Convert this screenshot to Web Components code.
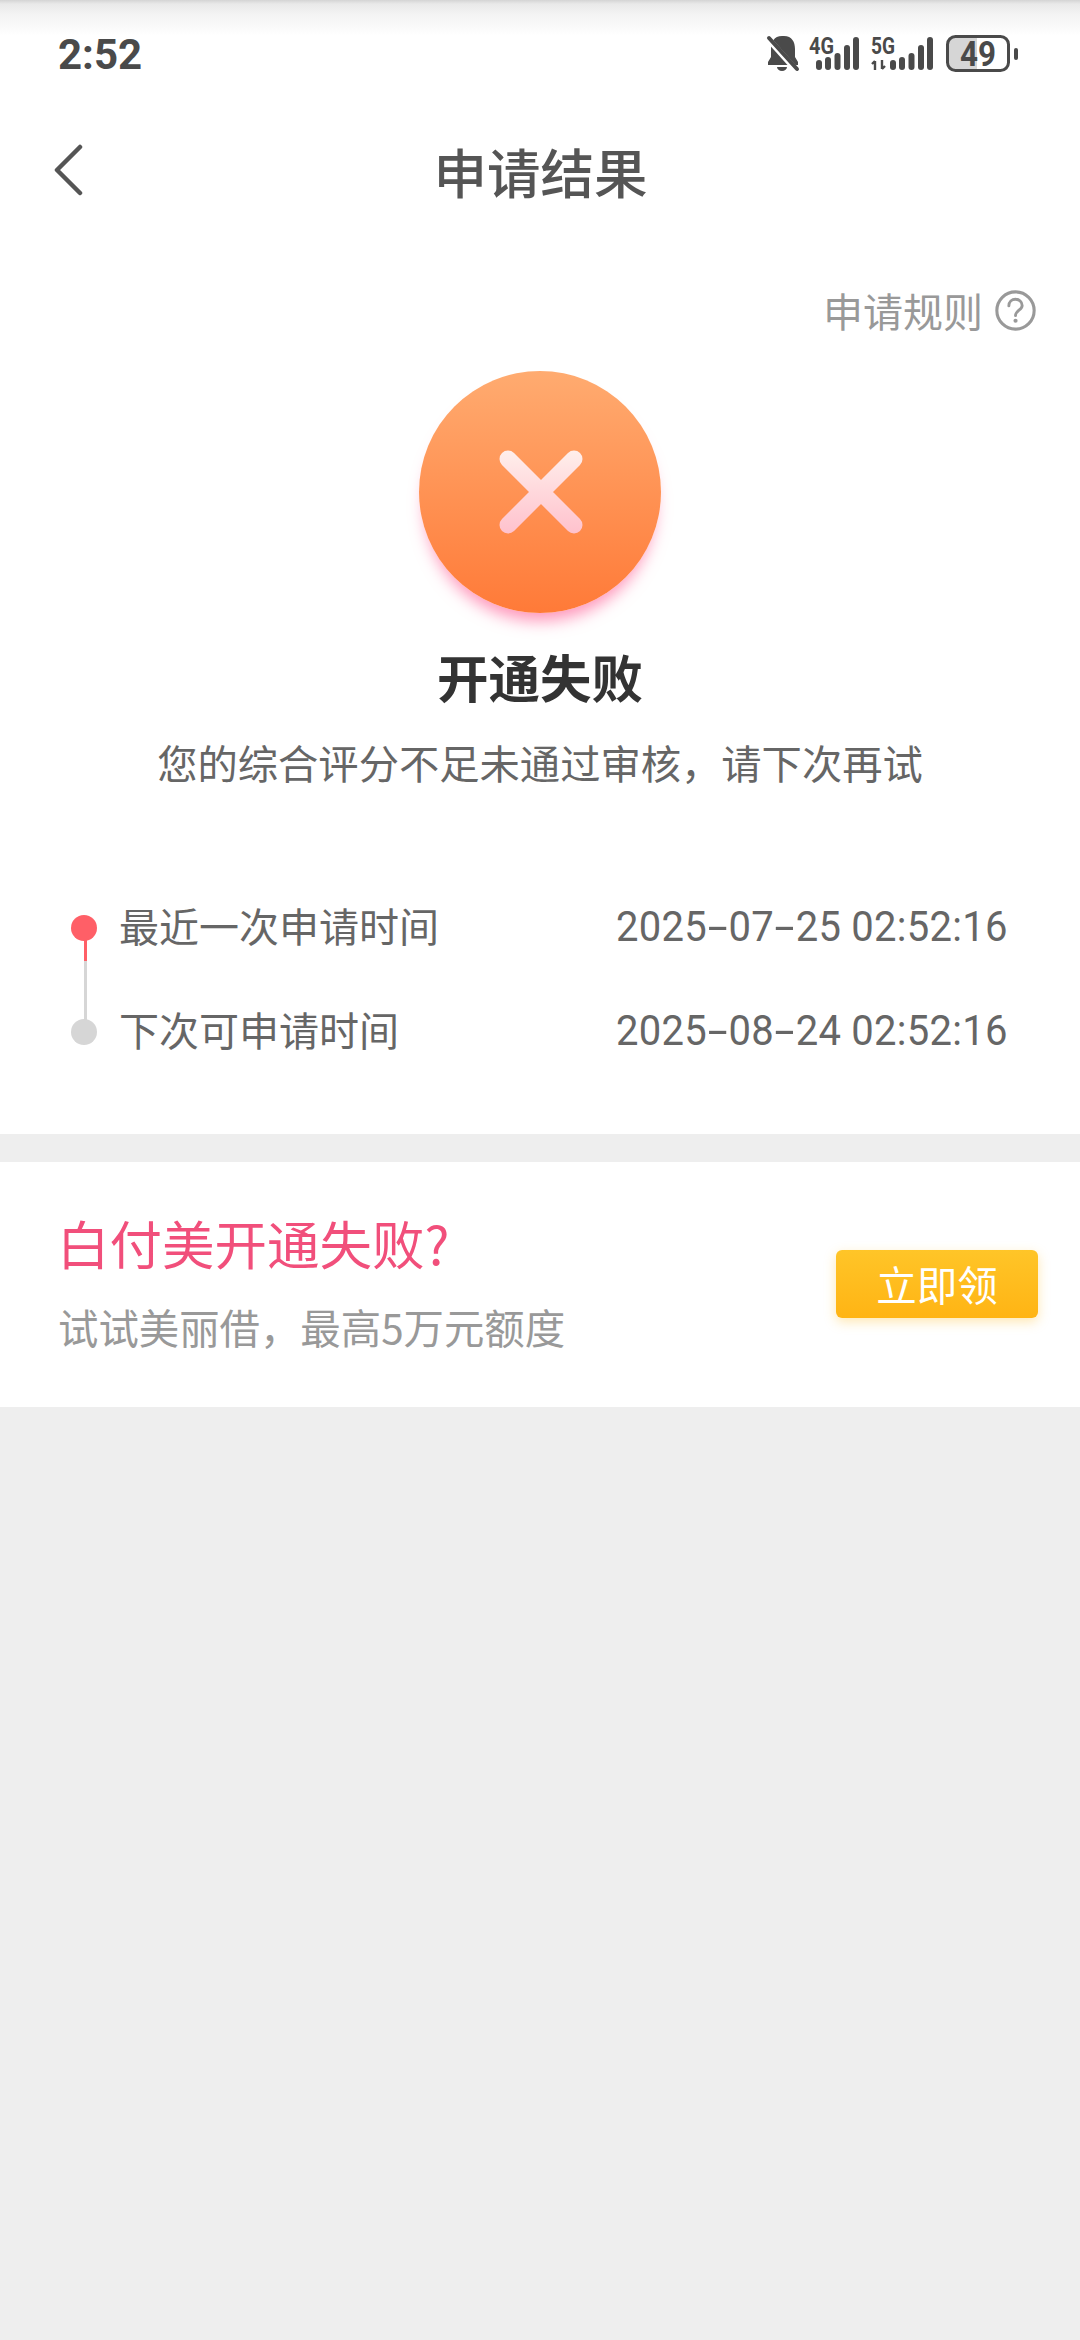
<!DOCTYPE html>
<html lang="zh">
<head>
<meta charset="utf-8">
<title>申请结果</title>
<style>
  html, body { margin: 0; padding: 0; }
  body {
    width: 1080px;
    height: 2340px;
    overflow: hidden;
    background: #eeeeee;
    font-family: "Noto Sans CJK SC", "Noto Sans", sans-serif;
  }
  .top { display: block; background: #fff; }
</style>
</head>
<body>
<div class="top">
  <status-bar time="2:52" battery="49"></status-bar>
  <nav-bar>申请结果</nav-bar>
  <rule-link>申请规则</rule-link>
  <result-hero title="开通失败">您的综合评分不足未通过审核，请下次再试</result-hero>
  <time-line>
    <time-row label="最近一次申请时间" value="2025-07-25 02:52:16" active></time-row>
    <time-row label="下次可申请时间" value="2025-08-24 02:52:16"></time-row>
  </time-line>
</div>
<promo-card heading="白付美开通失败?" action="立即领">试试美丽借，最高5万元额度</promo-card>

<script>
class StatusBar extends HTMLElement {
  constructor() {
    super();
    this.shadowDOM = this.attachShadow({ mode: 'open' });
  }

  connectedCallback() {
    const time = this.getAttribute('time');
    const battery = this.getAttribute('battery');
    this.shadowDOM.innerHTML = `
      <style>
        :host {
          display: flex;
          align-items: flex-start;
          justify-content: space-between;
          height: 78px;
          padding: 31px 60px 0 58px;
          box-sizing: border-box;
          background: linear-gradient(#d4d4d4 0, #e9e9e9 4px, #f3f3f3 14px, #ffffff 36px);
        }
        .time {
          font: 700 42px/48px Roboto, sans-serif;
          color: #4a4a4a;
        }
        svg { display: block; margin-top: -7px; }
        text { font-family: Roboto, sans-serif; font-weight: 700; fill: #4a4a4a; }
      </style>
      <span class="time">${time}</span>
      <svg width="260" height="54" viewBox="760 24 260 54">
        <g fill="#4a4a4a">
          <path d="M782 36c-8 0-11 6-11 13v8l-3 5v3h30v-3l-3-5v-8c0-7-3-13-11-13z"/>
          <path d="M777 67h10a5 4 0 0 1-10 0z"/>
        </g>
        <path d="M770 41l26 29" stroke="#fff" stroke-width="6"/>
        <path d="M769 38l28 31" stroke="#4a4a4a" stroke-width="4" stroke-linecap="round"/>

        <text x="809" y="54" font-size="24" textLength="25" lengthAdjust="spacingAndGlyphs">4G</text>
        <g fill="#4a4a4a">
          <rect x="816" y="60" width="6" height="10" rx="3"/>
          <rect x="825" y="57" width="6" height="13" rx="3"/>
          <rect x="834.500" y="53" width="6" height="17" rx="3"/>
          <rect x="844" y="45" width="6" height="25" rx="3"/>
          <rect x="853" y="37" width="6" height="33" rx="3"/>
        </g>

        <text x="871" y="54" font-size="24" textLength="24" lengthAdjust="spacingAndGlyphs">5G</text>
        <path d="M875 70v-9m-3 3l3-3M882 60v9m3-3l-3 3" stroke="#4a4a4a" stroke-width="2.400" fill="none"/>
        <g fill="#4a4a4a">
          <rect x="890" y="60" width="6" height="10" rx="3"/>
          <rect x="899" y="57" width="6" height="13" rx="3"/>
          <rect x="908.500" y="53" width="6" height="17" rx="3"/>
          <rect x="918" y="45" width="6" height="25" rx="3"/>
          <rect x="927" y="37" width="6" height="33" rx="3"/>
        </g>

        <path d="M951 37.500h26v32h-26a3.500 3.500 0 0 1-3.500-3.500v-25a3.500 3.500 0 0 1 3.500-3.500z" fill="#d6d6d6"/>
        <rect x="947.500" y="36.500" width="61" height="34" rx="8" fill="none" stroke="#4a4a4a" stroke-width="3"/>
        <rect x="1014" y="48" width="4" height="12" rx="2" fill="#4a4a4a"/>
        <text x="960" y="65.500" font-size="35" textLength="36" lengthAdjust="spacingAndGlyphs">${battery}</text>
      </svg>
    `;
  }
}

class NavBar extends HTMLElement {
  constructor() {
    super();
    this.shadowDOM = this.attachShadow({ mode: 'open' });
  }

  connectedCallback() {
    this.shadowDOM.innerHTML = `
      <style>
        :host {
          display: flex;
          align-items: center;
          justify-content: center;
          position: relative;
          height: 192px;
          box-sizing: border-box;
          padding: 0 0 6px 1px;
          font: 500 53.500px/1 "Noto Sans CJK SC", sans-serif;
          color: #555;
        }
        svg { position: absolute; left: 54px; top: 66px; }
      </style>
      <svg width="30" height="52" viewBox="0 0 30 52">
        <path d="M26 3L3 26l23 23" fill="none" stroke="#555" stroke-width="4.500" stroke-linecap="round" stroke-linejoin="round"/>
      </svg>
      <slot></slot>
    `;
  }
}

class RuleLink extends HTMLElement {
  constructor() {
    super();
    this.shadowDOM = this.attachShadow({ mode: 'open' });
  }

  connectedCallback() {
    this.shadowDOM.innerHTML = `
      <style>
        :host {
          display: flex;
          align-items: center;
          justify-content: flex-end;
          gap: 12px;
          height: 60px;
          margin-top: 10px;
          padding-right: 44px;
          font: 400 40px/1 "Noto Sans CJK SC", sans-serif;
          color: #999;
        }
        svg { display: block; }
      </style>
      <slot></slot>
      <svg width="41" height="41" viewBox="0 0 40 40">
        <circle cx="20" cy="20" r="18.200" fill="none" stroke="#999" stroke-width="3"/>
        <path d="M13.500 15.500c0-4 3-6.500 6.500-6.500s6.500 2.500 6.500 6c0 4.500-6.500 5-6.500 10" fill="none" stroke="#999" stroke-width="2.800" stroke-linecap="round"/>
        <circle cx="20" cy="30" r="2" fill="#999"/>
      </svg>
    `;
  }
}

class ResultHero extends HTMLElement {
  constructor() {
    super();
    this.shadowDOM = this.attachShadow({ mode: 'open' });
  }

  connectedCallback() {
    this.shadowDOM.innerHTML = `
      <style>
        :host {
          display: flex;
          flex-direction: column;
          align-items: center;
          padding-top: 31px;
        }
        .badge {
          width: 242px;
          height: 242px;
          border-radius: 50%;
          display: flex;
          align-items: center;
          justify-content: center;
          background: linear-gradient(#ffab70, #ff7a38);
          box-shadow: 0 14px 16px -6px rgba(255, 80, 140, .6);
        }
        .badge svg { margin-left: 2px; }
        h1 {
          margin: 30px 0 0;
          font: 700 51.500px/66px "Noto Sans CJK SC", sans-serif;
          color: #333;
        }
        p {
          margin: 23px 0 0;
          font: 400 40.300px/60px "Noto Sans CJK SC", sans-serif;
          color: #666;
        }
      </style>
      <div class="badge">
        <svg width="88" height="88" viewBox="0 0 88 88">
          <defs>
            <linearGradient id="cross" gradientUnits="userSpaceOnUse" x1="0" y1="0" x2="0" y2="88">
              <stop offset="0" stop-color="#fff0ec"/>
              <stop offset="1" stop-color="#ffc0cc"/>
            </linearGradient>
          </defs>
          <path d="M11 11L77 77M77 11L11 77" stroke="url(#cross)" stroke-width="17" stroke-linecap="round" fill="none"/>
        </svg>
      </div>
      <h1>${this.getAttribute('title')}</h1>
      <p><slot></slot></p>
    `;
  }
}

class TimeLine extends HTMLElement {
  constructor() {
    super();
    this.shadowDOM = this.attachShadow({ mode: 'open' });
  }

  connectedCallback() {
    this.shadowDOM.innerHTML = `
      <style>
        :host {
          display: flex;
          flex-direction: column;
          gap: 44px;
          position: relative;
          margin-top: 103px;
          padding: 0 72px 75px 119px;
        }
        .rail {
          position: absolute;
          left: 84px;
          top: 33px;
          width: 3px;
          height: 100px;
          background: linear-gradient(#ff5f67 0 33px, #d6d6d6 33px);
        }
      </style>
      <div class="rail"></div>
      <slot></slot>
    `;
  }
}

class TimeRow extends HTMLElement {
  constructor() {
    super();
    this.shadowDOM = this.attachShadow({ mode: 'open' });
  }

  connectedCallback() {
    const dot = this.hasAttribute('active') ? '#ff5f67' : '#d6d6d6';
    const value = this.getAttribute('value').replace(/-/g, '<span class="dash">-</span>');
    this.shadowDOM.innerHTML = `
      <style>
        :host {
          display: flex;
          align-items: center;
          justify-content: space-between;
          position: relative;
          height: 60px;
          font: 400 40px/60px "Noto Sans CJK SC", sans-serif;
          color: #666;
        }
        .dot {
          position: absolute;
          left: -48px;
          top: 20px;
          width: 26px;
          height: 26px;
          border-radius: 50%;
          background: ${dot};
        }
        /* the app uses a narrow DIN-like face, Roboto squeezed is the nearest */
        .value {
          display: inline-block;
          margin-top: 4px;
          font: 400 42.500px/60px Roboto, sans-serif;
          letter-spacing: .3px;
          white-space: nowrap;
          transform: scaleX(.94);
          transform-origin: right center;
        }
        .dash {
          display: inline-block;
          width: 23px;
          text-align: center;
          transform: scaleX(1.8);
        }
      </style>
      <span class="dot"></span>
      <span>${this.getAttribute('label')}</span>
      <span class="value">${value}</span>
    `;
  }
}

class PromoCard extends HTMLElement {
  constructor() {
    super();
    this.shadowDOM = this.attachShadow({ mode: 'open' });
  }

  connectedCallback() {
    this.shadowDOM.innerHTML = `
      <style>
        :host {
          display: flex;
          align-items: center;
          justify-content: space-between;
          height: 245px;
          margin-top: 28px;
          padding: 0 42px 0 58px;
          box-sizing: border-box;
          background: #fff;
        }
        .copy { padding-bottom: 6px; }
        .title {
          margin-left: -1px;
          font: 400 52.500px/66px "Noto Sans CJK SC", sans-serif;
          color: #f14f7b;
        }
        .sub {
          margin-top: 24px;
          font: 400 40.400px/56px "Noto Sans CJK SC", sans-serif;
          color: #999;
        }
        button {
          width: 202px;
          height: 68px;
          margin-top: -1px;
          padding: 0;
          border: none;
          border-radius: 6px;
          background: linear-gradient(#ffc528, #ffb414);
          box-shadow: 0 4px 12px rgba(255, 190, 40, .35);
          font: 400 40.500px/1 "Noto Sans CJK SC", sans-serif;
          color: #fff;
        }
      </style>
      <div class="copy">
        <div class="title">${this.getAttribute('heading')}</div>
        <div class="sub"><slot></slot></div>
      </div>
      <button type="button">${this.getAttribute('action')}</button>
    `;
  }
}

customElements.define('status-bar', StatusBar);
customElements.define('nav-bar', NavBar);
customElements.define('rule-link', RuleLink);
customElements.define('result-hero', ResultHero);
customElements.define('time-line', TimeLine);
customElements.define('time-row', TimeRow);
customElements.define('promo-card', PromoCard);
</script>
</body>
</html>
